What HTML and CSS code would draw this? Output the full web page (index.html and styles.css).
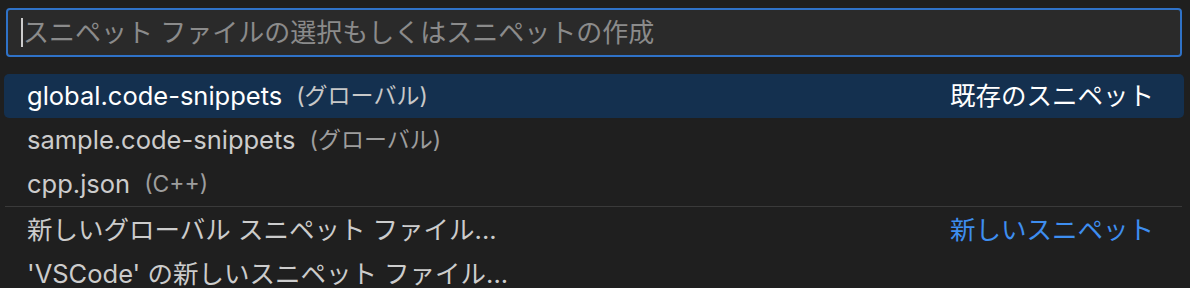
FILE: index.html
```html
<!DOCTYPE html>
<html lang="ja">
<head>
    <meta charset="UTF-8">
    <meta name="viewport" content="width=device-width, initial-scale=1.0">
    <title>Snippets</title>
    <link rel="stylesheet" href="styles.css">
</head>
<body>
    <div class="quick-pick">
        <div class="input-box">
            <span class="caret"></span>
            <span class="placeholder">スニペット ファイルの選択もしくはスニペットの作成</span>
        </div>
        <div class="list">
            <div class="item active">
                <span class="label">global.code-snippets</span>
                <span class="desc">(グローバル)</span>
                <span class="group">既存のスニペット</span>
            </div>
            <div class="item">
                <span class="label">sample.code-snippets</span>
                <span class="desc">(グローバル)</span>
            </div>
            <div class="item">
                <span class="label">cpp.json</span>
                <span class="desc">(C++)</span>
            </div>
            <div class="separator"></div>
            <div class="item">
                <span class="label">新しいグローバル スニペット ファイル...</span>
                <span class="group link">新しいスニペット</span>
            </div>
            <div class="item">
                <span class="label">'VSCode' の新しいスニペット ファイル...</span>
            </div>
        </div>
    </div>
</body>
</html>
```

FILE: styles.css
```css
* {
    box-sizing: border-box;
}
body {
    margin: 0;
    background: #1f1f1f;
    font-family: Inter, "Noto Sans CJK JP", sans-serif;
    color: #cccccc;
    overflow: hidden;
}
.quick-pick {
    padding-top: 8px;
}
.input-box {
    display: flex;
    align-items: center;
    margin: 0 8px 0 6px;
    height: 49px;
    padding-left: 13px;
    background: #2a2a2a;
    border: 2px solid #2f72c8;
    border-radius: 4px;
}
.caret {
    width: 2px;
    height: 29px;
    background: #cccccc;
}
.placeholder {
    font-size: 26px;
    line-height: 32px;
    color: #8b8b8b;
}
.list {
    margin-top: 17px;
}
.item {
    display: flex;
    align-items: center;
    height: 44px;
    margin: 0 6px 0 4px;
    padding: 0 30px 0 23px;
    font-size: 25.5px;
    line-height: 30px;
    border-radius: 5px;
    white-space: nowrap;
}
.item.active {
    background: #14304f;
    color: #ffffff;
}
.desc {
    margin-left: 14px;
    font-size: 23px;
    color: #9d9d9d;
}
.active .desc {
    color: #c8c8c8;
}
.group {
    margin-left: auto;
    font-size: 25.5px;
}
.group.link {
    color: #3e8ef0;
}
.separator {
    height: 1px;
    margin: 0 8px 1px 5px;
    background: #3a3a3a;
}
```
